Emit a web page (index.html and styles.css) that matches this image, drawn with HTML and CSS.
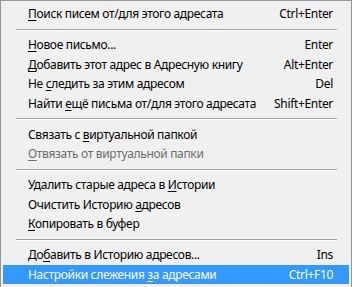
FILE: index.html
```html
<!DOCTYPE html>
<html lang="ru">
<head>
  <meta charset="UTF-8" />
  <title>Контекстное меню</title>
  <link rel="stylesheet" href="styles.css">
</head>
<body>

<div class="menu">
  <div class="item"><span><u>П</u>оиск писем от/для этого адресата</span><span class="key">Ctrl+Enter</span></div>
  <div class="sep"></div>
  <div class="item"><span><u>Н</u>овое письмо...</span><span class="key">Enter</span></div>
  <div class="item"><span><u>Д</u>обавить этот адрес в Адресную книгу</span><span class="key">Alt+Enter</span></div>
  <div class="item"><span>Не <u>с</u>ледить за этим адресом</span><span class="key">Del</span></div>
  <div class="item"><span>Найти <u>е</u>щё письма от/для этого адресата</span><span class="key">Shift+Enter</span></div>
  <div class="sep"></div>
  <div class="item"><span>Связать с <u>в</u>иртуальной папкой</span></div>
  <div class="item disabled"><span><u>О</u>твязать от виртуальной папки</span></div>
  <div class="sep"></div>
  <div class="item"><span>Удалить старые адреса в <u>И</u>стории</span></div>
  <div class="item"><span>Очистить Историю <u>а</u>дресов</span></div>
  <div class="item"><span><u>К</u>опировать в буфер</span></div>
  <div class="sep"></div>
  <div class="item"><span>До<u>б</u>авить в Историю адресов...</span><span class="key">Ins</span></div>
  <div class="item active"><span>Настройки слежения <u>з</u>а адресами</span><span class="key">Ctrl+F10</span></div>
</div>

</body>
</html>
```

FILE: styles.css
```css
body {
  margin: 0;
  font-family: "Noto Sans", Arial, sans-serif;
  font-size: 12px;
  letter-spacing: -0.33px;
  color: #000;
  background: #fff;
}
.menu {
  width: 346px;
  height: 281px;
  padding: 3px 2px 2px 2px;
  border: 1px solid #979797;
  background: #f0f0f0;
}
.item {
  display: flex;
  justify-content: space-between;
  align-items: center;
  height: 19.5px;
  padding: 0 16px 0 25px;
  white-space: nowrap;
}
.item u {
  text-underline-offset: 2px;
}
.disabled {
  color: #6d6d6d;
}
.active {
  background: #3399ff;
  color: #fff;
}
.sep {
  height: 1px;
  margin: 5px 12px 4.5px 13px;
  border-top: 1px solid #a0a0a0;
  background: #fff;
}
```
